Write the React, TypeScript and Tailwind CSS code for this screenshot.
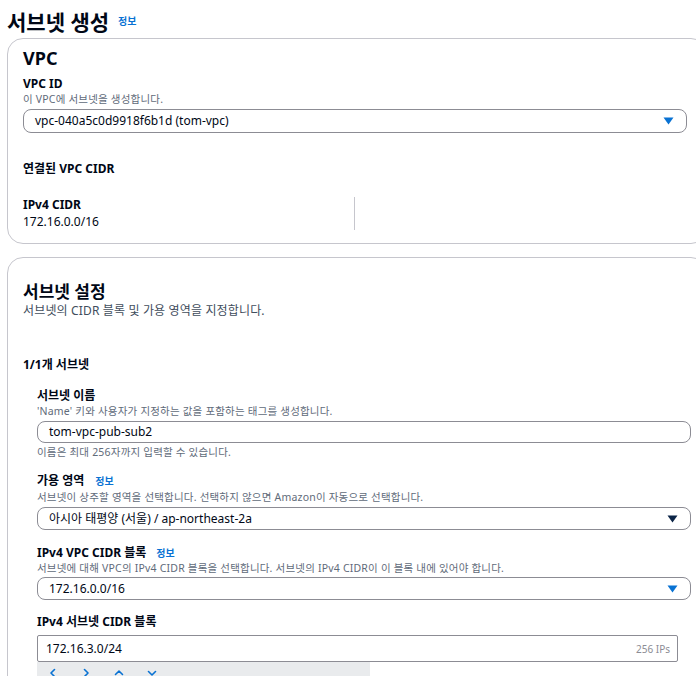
import React from 'react';

const font = { fontFamily: '"Noto Sans", "Noto Sans CJK KR", sans-serif' };

const Caret = ({ dark }: { dark?: boolean }) => (
  <svg width="11" height="8" viewBox="0 0 11 8" className="shrink-0">
    <path d="M0.5 0.5 H10.5 L5.5 7.5 Z" fill={dark ? '#0b2447' : '#0972d3'} />
  </svg>
);

const Select = ({ value, dark, width, height }: { value: string; dark?: boolean; width: string; height: string }) => (
  <div
    className={`${width} ${height} flex items-center justify-between pl-[11px] pr-[12px] border border-[#8c8c94] rounded-lg text-[12px] text-[#000716] bg-white`}
  >
    <span className="leading-none">{value}</span>
    <Caret dark={dark} />
  </div>
);

const Info = () => <span className="text-[10px] font-bold text-[#0972d3] leading-none">정보</span>;

const Chevron = ({ d }: { d: string }) => (
  <svg width="10" height="10" viewBox="0 0 10 10" fill="none" stroke="#0972d3" strokeWidth="1.6" strokeLinecap="round" strokeLinejoin="round">
    <path d={d} />
  </svg>
);

const desc = 'text-[10.5px] tracking-[0.2px] text-[#5f6b7a] leading-[14px]';

export default function App() {
  return (
    <div className="w-[696px] h-[676px] overflow-hidden bg-white text-[#000716]" style={font}>
      <div className="w-[720px] pl-[7px]">
        {/* Header */}
        <div className="flex items-center gap-[9px] pt-[7px] h-[36px]">
          <h1 className="text-[21px] font-bold leading-[28px]">서브넷 생성</h1>
          <span className="mt-[-6px]"><Info /></span>
        </div>

        {/* VPC card */}
        <div className="mt-[2px] w-[700px] border border-[#c6c6cd] rounded-2xl pl-[15px] pt-[8px] pb-[13px]">
          <h2 className="text-[18px] font-bold leading-[22px]">VPC</h2>
          <div className="mt-[7px] text-[12px] font-bold leading-[16px]">VPC ID</div>
          <div className={desc}>이 VPC에 서브넷을 생성합니다.</div>
          <div className="mt-[3px]">
            <Select value="vpc-040a5c0d9918f6b1d (tom-vpc)" width="w-[664px]" height="h-[24px]" />
          </div>
          <div className="mt-[28px] text-[12px] font-bold leading-[16px]">연결된 VPC CIDR</div>
          <div className="mt-[20px] grid grid-cols-2 w-[664px]">
            <div className="border-r border-[#c6c6cd] h-[33px]">
              <div className="text-[12px] font-bold leading-[16px]">IPv4 CIDR</div>
              <div className="text-[12px] leading-[17px]">172.16.0.0/16</div>
            </div>
            <div />
          </div>
        </div>

        {/* Subnet settings card */}
        <div className="mt-[13px] w-[700px] border border-[#c6c6cd] rounded-2xl pl-[15px] pt-[24px] pb-[20px]">
          <h2 className="text-[17px] font-bold leading-[20px]">서브넷 설정</h2>
          <div className="mt-[1px] text-[12px] tracking-[0.15px] text-[#414d5c] leading-[16px]">
            서브넷의 CIDR 블록 및 가용 영역을 지정합니다.
          </div>
          <div className="mt-[38px] text-[12px] font-bold leading-[16px]">1/1개 서브넷</div>

          <div className="pl-[14px]">
            <div className="mt-[15px] text-[12px] font-bold leading-[16px]">서브넷 이름</div>
            <div className={desc}>'Name' 키와 사용자가 지정하는 값을 포함하는 태그를 생성합니다.</div>
            <div className="mt-[3px] w-[654px] h-[22px] flex items-center pl-[11px] border border-[#8c8c94] rounded-lg text-[12px] leading-none">
              tom-vpc-pub-sub2
            </div>
            <div className={`mt-[2px] ${desc}`}>이름은 최대 256자까지 입력할 수 있습니다.</div>

            <div className="mt-[14px] flex items-center gap-[11px] h-[16px]">
              <span className="text-[12px] font-bold leading-[16px]">가용 영역</span>
              <Info />
            </div>
            <div className={`mt-[1px] ${desc}`}>
              서브넷이 상주할 영역을 선택합니다. 선택하지 않으면 Amazon이 자동으로 선택합니다.
            </div>
            <div className="mt-[3px]">
              <Select value="아시아 태평양 (서울) / ap-northeast-2a" dark width="w-[654px]" height="h-[23px]" />
            </div>

            <div className="mt-[15px] flex items-center gap-[10px] h-[16px]">
              <span className="text-[12px] font-bold leading-[16px]">IPv4 VPC CIDR 블록</span>
              <Info />
            </div>
            <div className={desc}>
              서브넷에 대해 VPC의 IPv4 CIDR 블록을 선택합니다. 서브넷의 IPv4 CIDR이 이 블록 내에 있어야 합니다.
            </div>
            <div className="mt-[2px]">
              <Select value="172.16.0.0/16" width="w-[654px]" height="h-[23px]" />
            </div>

            <div className="mt-[14px] text-[12px] font-bold leading-[16px]">IPv4 서브넷 CIDR 블록</div>
            <div className="mt-[5px] w-[641px] h-[27px] flex items-center justify-between pl-[8px] pr-[7px] border border-[#8c8c94] rounded-[2px]">
              <span className="text-[12px] leading-none">172.16.3.0/24</span>
              <span className="text-[10px] text-[#8c8c94] leading-none">256 IPs</span>
            </div>
            <div className="w-[333px] h-[30px] bg-[#e9ebed] flex items-start gap-[23px] pl-[11px] pt-[6px]">
              <Chevron d="M6.5 1.5 L3 5 L6.5 8.5" />
              <Chevron d="M3.5 1.5 L7 5 L3.5 8.5" />
              <Chevron d="M1.5 6.5 L5 3 L8.5 6.5" />
              <Chevron d="M1.5 3.5 L5 7 L8.5 3.5" />
            </div>
          </div>
        </div>
      </div>
    </div>
  );
}
